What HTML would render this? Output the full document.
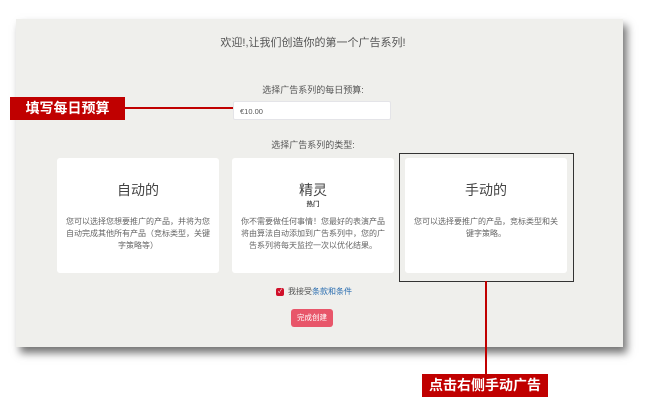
<!DOCTYPE html>
<html><head><meta charset="utf-8"><style>
body{margin:0;width:653px;height:402px;background:#fff;position:relative;overflow:hidden;font-family:"Liberation Sans","Noto Sans CJK SC",sans-serif;}
.panel{position:absolute;left:16px;top:19px;width:607px;height:328px;background:#efefec;box-shadow:4px 6px 8px rgba(0,0,0,.55);}
.a{position:absolute;color:#555;text-align:center;}
.card{position:absolute;top:158px;width:162px;height:115px;background:#fff;border-radius:3px;}
.card h3{margin:0;position:absolute;top:22px;width:100%;text-align:center;font-weight:normal;font-size:14px;color:#444;}
.card p{margin:0;position:absolute;top:58px;left:8px;right:8px;text-align:center;font-size:8px;line-height:12px;color:#666;}
.lab{position:absolute;background:#c00000;color:#fff;font-weight:bold;font-size:14px;text-align:center;}
</style></head><body>
<div class="panel"></div>
<div class="a" style="left:0;width:626px;top:34px;font-size:11px;">欢迎!,让我们创造你的第一个广告系列!</div>
<div class="a" style="left:0;width:626px;top:83px;font-size:9px;">选择广告系列的每日预算:</div>
<div style="position:absolute;left:233px;top:101px;width:158px;height:19px;background:#fff;border:1px solid #e4e4e8;border-radius:2px;font-size:7.5px;color:#555;line-height:19px;padding-left:6px;box-sizing:border-box;">€10.00</div>
<div class="a" style="left:0;width:626px;top:138px;font-size:9px;">选择广告系列的类型:</div>
<div class="card" style="left:57px"><h3>自动的</h3><p>您可以选择您想要推广的产品，并将为您自动完成其他所有产品（竞标类型，关键字策略等）</p></div>
<div class="card" style="left:232px"><h3>精灵</h3><div style="position:absolute;top:40px;width:100%;text-align:center;font-size:6.5px;font-weight:bold;color:#444">热门</div><p>你不需要做任何事情！您最好的表演产品将由算法自动添加到广告系列中，您的广告系列将每天监控一次以优化结果。</p></div>
<div class="card" style="left:405px"><h3>手动的</h3><p style="left:8px;right:8px">您可以选择要推广的产品，竞标类型和关键字策略。</p></div>
<div style="position:absolute;left:399px;top:153px;width:173px;height:127px;border:1px solid #333;"></div>
<div style="position:absolute;left:276px;top:288px;width:8px;height:8px;background:#d0102a;border-radius:2px;color:#fff;font-size:6px;line-height:8px;text-align:center;">✓</div>
<div style="position:absolute;left:288px;top:286px;font-size:8px;color:#555;">我接受<span style="color:#2a6db0">条款和条件</span></div>
<div style="position:absolute;left:291px;top:309px;width:42px;height:18px;background:#e8566a;border-radius:3px;color:#fff;font-size:7.5px;line-height:18px;text-align:center;">完成创建</div>
<div class="lab" style="left:10px;top:97px;width:115px;height:23px;line-height:23px;">填写每日预算</div>
<div style="position:absolute;left:125px;top:107px;width:108px;height:2px;background:#c00000"></div>
<div style="position:absolute;left:485px;top:281px;width:2px;height:94px;background:#c00000"></div>
<div class="lab" style="left:422px;top:374px;width:126px;height:23px;line-height:23px;">点击右侧手动广告</div>
</body></html>
